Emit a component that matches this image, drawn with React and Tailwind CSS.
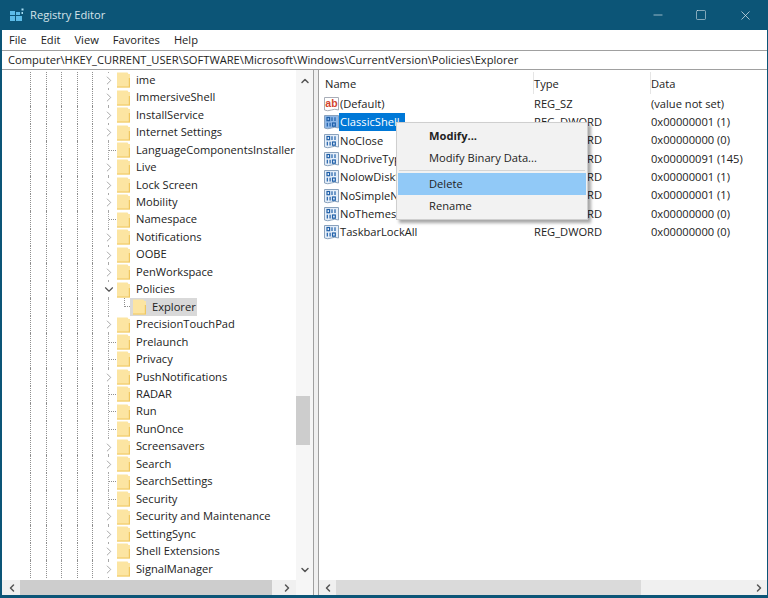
import { ChevronRight, ChevronDown, ChevronLeft, ChevronUp, Minus, Square, X } from "lucide-react";

const TREE = [
  "ime",
  "ImmersiveShell",
  "InstallService",
  "Internet Settings",
  "LanguageComponentsInstaller",
  "Live",
  "Lock Screen",
  "Mobility",
  "Namespace",
  "Notifications",
  "OOBE",
  "PenWorkspace",
  "Policies",
  "Explorer",
  "PrecisionTouchPad",
  "Prelaunch",
  "Privacy",
  "PushNotifications",
  "RADAR",
  "Run",
  "RunOnce",
  "Screensavers",
  "Search",
  "SearchSettings",
  "Security",
  "Security and Maintenance",
  "SettingSync",
  "Shell Extensions",
  "SignalManager",
];

// keys without subkeys only get a dotted stub
const LEAVES = ["LanguageComponentsInstaller", "Namespace", "Prelaunch", "Privacy", "RADAR", "Run", "RunOnce", "SearchSettings", "Security"];

const VALUES = [
  { name: "(Default)", type: "REG_SZ", data: "(value not set)", sz: true },
  { name: "ClassicShell", type: "REG_DWORD", data: "0x00000001 (1)", selected: true },
  { name: "NoClose", type: "REG_DWORD", data: "0x00000000 (0)" },
  { name: "NoDriveTypeAutoRun", type: "REG_DWORD", data: "0x00000091 (145)" },
  { name: "NolowDiskSpaceChecks", type: "REG_DWORD", data: "0x00000001 (1)" },
  { name: "NoSimpleNetIDList", type: "REG_DWORD", data: "0x00000001 (1)" },
  { name: "NoThemesTab", type: "REG_DWORD", data: "0x00000000 (0)" },
  { name: "TaskbarLockAll", type: "REG_DWORD", data: "0x00000000 (0)" },
];

function Folder() {
  return (
    <svg width="13" height="16" viewBox="0 0 13 16" className="shrink-0">
      <path d="M0 0.5 H10.5 L11.5 2 H13 V15.5 H0 Z" fill="#fce5a2" />
      <path d="M11.8 6 H13 V15.5 H0 V14.6 H11.8 Z" fill="#f0c760" />
    </svg>
  );
}

function DwordIcon({ selected }) {
  return (
    <svg width="15" height="16" viewBox="0 0 15 16" className="shrink-0">
      <path d="M0.5 1.5 H14.5 V14 Q10.5 12.5 7.5 14 Q3.5 15.5 0.5 14 Z" fill={selected ? "#8fb8e8" : "#e6eff9"} stroke="#8aa2bd" />
      <g fill="none" stroke="#1f5fa8" strokeWidth="1.2">
        <rect x="3" y="3.5" width="2.6" height="3.2" />
        <path d="M8 3.2 V7 M11 3.2 V7" />
        <path d="M3.3 8.8 V12.6 M6.1 8.8 V12.6" />
        <rect x="8.5" y="9" width="2.8" height="3.2" />
      </g>
    </svg>
  );
}

function SzIcon() {
  return (
    <svg width="15" height="16" viewBox="0 0 15 16" className="shrink-0">
      <path d="M0.5 1.5 H14.5 V14 Q10.5 12.5 7.5 14 Q3.5 15.5 0.5 14 Z" fill="#fff" stroke="#a9aeb8" />
      <text x="7.5" y="10.5" textAnchor="middle" fontSize="10.5" fontWeight="700" fontFamily="Liberation Sans, sans-serif" fill="#d2452f">
        ab
      </text>
    </svg>
  );
}

function TreeRow({ label }) {
  const isChild = label === "Explorer";
  const isLeaf = LEAVES.includes(label);
  const open = label === "Policies";
  return (
    <div className="flex h-[17.46px] shrink-0 items-center">
      <div className="h-full w-[28px] shrink-0" />
      {[0, 1, 2, 3, 4].map((i) => (
        <div key={i} className="h-full w-[15.5px] shrink-0 border-l border-dotted border-[#8f8f8f]" />
      ))}
      <div className={`relative flex h-full shrink-0 items-center border-l border-dotted border-[#a8a8a8] ${isChild ? "w-[16px]" : "w-[9.5px]"}`}>
        {isLeaf && <div className="h-0 w-[7px] border-t border-dotted border-[#8f8f8f]" />}
        {!isLeaf && !isChild && (
          <div className="absolute left-[-7px] top-[2px] flex h-[14px] w-[14px] items-center justify-center bg-white">
            {open ? <ChevronDown size={15} strokeWidth={2} color="#555" /> : <ChevronRight size={15} strokeWidth={1.6} color="#a3a3a3" />}
          </div>
        )}
      </div>
      {isChild ? (
        <>
          <div className="h-1/2 w-[6px] shrink-0 self-start border-b border-l border-dotted border-[#8f8f8f]" />
          <div className="flex h-full items-center bg-[#d9d9d9] pl-[3.5px] pr-[1px]">
            <Folder />
            <span className="ml-[6px]">{label}</span>
          </div>
        </>
      ) : (
        <>
          <Folder />
          <span className="ml-[6px] whitespace-nowrap">{label}</span>
        </>
      )}
    </div>
  );
}

function ScrollCorner({ children, className = "" }) {
  return <div className={`flex h-[15px] w-[17px] shrink-0 items-center justify-center ${className}`}>{children}</div>;
}

export default function App() {
  return (
    <div
      className="flex h-[598px] w-[768px] flex-col overflow-hidden bg-[#0c5577] text-[11.15px] text-[#222]"
      style={{ fontFamily: '"Open Sans", "Noto Sans", sans-serif' }}
    >
      {/* Title bar */}
      <div className="flex h-[30px] shrink-0 items-center text-[#d5e3ea]">
        <svg width="16" height="16" viewBox="0 0 16 16" className="ml-[9px] shrink-0">
          <path d="M1 4 H6 V8 H1 Z M1 9 H6 V14 H1 Z M7 9 H13 V14 H7 Z M7 5 H11 V8 H7 Z" fill="#5dbce8" />
          <path d="M12.5 1.5 H14.5 V3.5 H12.5 Z M12.5 5 H14 V7 H12.5 Z" fill="#a8dff5" />
        </svg>
        <span className="ml-[5px]">Registry Editor</span>
        <div className="ml-auto flex items-center">
          <Minus size={14} strokeWidth={1.2} className="mr-[30px]" />
          <Square size={12} strokeWidth={1.2} className="mr-[31px]" />
          <X size={15} strokeWidth={1.2} className="mr-[15px]" />
        </div>
      </div>

      <div className="mb-[3px] ml-[2px] mr-[1px] flex min-h-0 flex-1 flex-col bg-[#f0f0f0]">
        {/* Menu */}
        <div className="flex h-[20px] shrink-0 items-center gap-[14px] bg-white pl-[7px]">
          {["File", "Edit", "View", "Favorites", "Help"].map((m) => (
            <span key={m}>{m}</span>
          ))}
        </div>

        {/* Address bar */}
        <div className="flex h-[20px] shrink-0 items-center border-y border-[#a0a0a0] bg-white pl-[6px]">
          Computer\HKEY_CURRENT_USER\SOFTWARE\Microsoft\Windows\CurrentVersion\Policies\Explorer
        </div>

        <div className="flex min-h-0 flex-1 gap-[4px]">
          {/* Tree pane */}
          <div className="flex w-[312px] shrink-0 border-r border-[#a0a0a0] bg-white">
            <div className="flex min-w-0 flex-1 flex-col">
              <div className="min-h-0 flex-1 overflow-hidden pt-[1.5px]">
                {TREE.map((t) => (
                  <TreeRow key={t} label={t} />
                ))}
              </div>
              <div className="flex h-[15px] shrink-0 bg-[#f0f0f0]">
                <ScrollCorner className="ml-[1px]">
                  <ChevronLeft size={12} strokeWidth={3} color="#555" />
                </ScrollCorner>
                <div className="h-full w-[252px] bg-[#cdcdcd]" />
                <ScrollCorner className="ml-auto mr-[1px]">
                  <ChevronRight size={12} strokeWidth={3} color="#555" />
                </ScrollCorner>
              </div>
            </div>
            <div className="flex w-[17px] shrink-0 flex-col bg-[#f6f6f6]">
              <ScrollCorner className="mt-[3px]">
                <ChevronUp size={12} strokeWidth={3} color="#555" />
              </ScrollCorner>
              <div className="mt-[308px] h-[49px] w-[14px] bg-[#cdcdcd]" />
              <ScrollCorner className="mb-[18px] mt-auto">
                <ChevronDown size={12} strokeWidth={3} color="#555" />
              </ScrollCorner>
            </div>
          </div>

          {/* Values pane */}
          <div className="relative flex min-w-0 flex-1 flex-col border-l border-[#a0a0a0] bg-white">
            <div className="flex h-[24px] shrink-0 items-center pt-[2px]">
              <div className="h-full w-[214px] shrink-0 pl-[6px] leading-[24px]">Name</div>
              <div className="h-full w-[117px] shrink-0 border-l border-[#e5e5e5] leading-[24px]">Type</div>
              <div className="h-full flex-1 border-l border-[#e5e5e5] leading-[24px]">Data</div>
            </div>
            <div className="min-h-0 flex-1 overflow-hidden pt-[1px]">
              {VALUES.map((v) => (
                <div key={v.name} className="flex h-[18.3px] items-center">
                  <div className="flex w-[214px] shrink-0 items-center pl-[5px]">
                    {v.sz ? <SzIcon /> : <DwordIcon selected={v.selected} />}
                    <span className={`pl-[1px] leading-[18px] ${v.selected ? "bg-[#0078d7] pr-[5px] text-white" : ""}`}>{v.name}</span>
                  </div>
                  <div className="w-[117px] shrink-0 pl-[1px]">{v.type}</div>
                  <div className="pl-[1px]">{v.data}</div>
                </div>
              ))}
            </div>
            <div className="flex h-[15px] shrink-0 items-center bg-[#f0f0f0]">
              <ScrollCorner>
                <ChevronLeft size={12} strokeWidth={3} color="#555" />
              </ScrollCorner>
              <div className="h-full w-[305px] bg-[#dadada]" />
              <ScrollCorner className="ml-auto">
                <ChevronRight size={12} strokeWidth={3} color="#555" />
              </ScrollCorner>
            </div>

            {/* Context menu */}
            <div className="absolute left-[77px] top-[52px] w-[192px] border border-[#cfcfcf] bg-[#f2f2f2] py-[2px] shadow-[3px_3px_3px_rgba(0,0,0,0.35)]">
              <div className="h-[21.5px] pl-[32px] font-bold leading-[21.5px]">Modify...</div>
              <div className="h-[21.5px] pl-[32px] leading-[21.5px]">Modify Binary Data...</div>
              <div className="mx-[2px] my-[2px] h-[1px] bg-[#d5d5d5]" />
              <div className="mx-[1px] h-[22px] bg-[#91c9f7] pl-[31px] leading-[22px]">Delete</div>
              <div className="h-[21.5px] pl-[32px] leading-[21.5px]">Rename</div>
            </div>
          </div>
        </div>
      </div>
    </div>
  );
}
